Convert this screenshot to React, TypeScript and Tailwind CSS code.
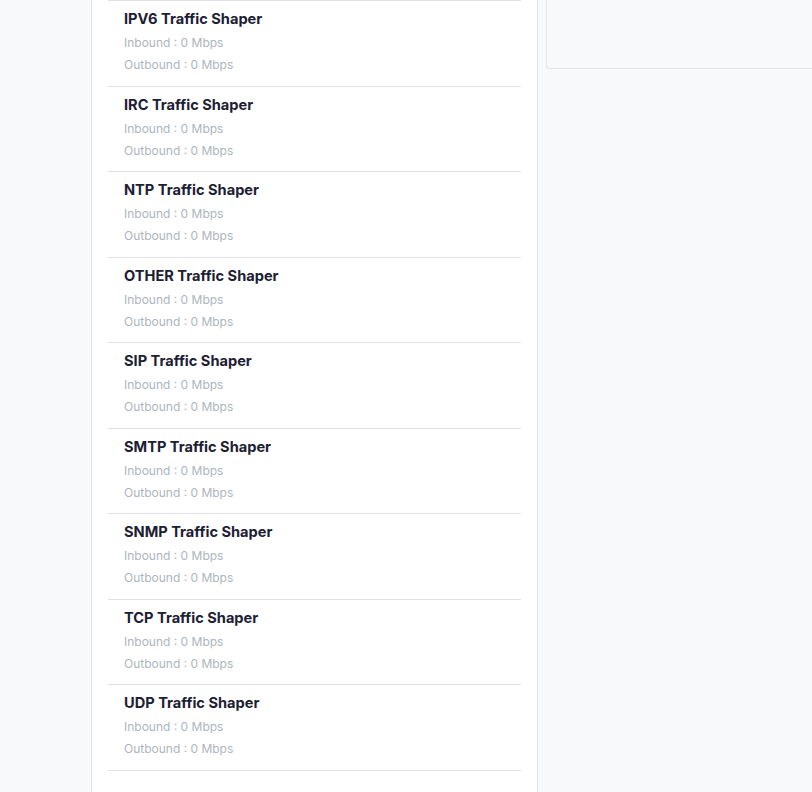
const SHAPERS = ['IPV6', 'IRC', 'NTP', 'OTHER', 'SIP', 'SMTP', 'SNMP', 'TCP', 'UDP'];

function ShaperRow({ name }: { name: string }) {
  return (
    <li className="border-b border-[#dee2e6] pl-4 pt-2 pb-[10px]">
      <h6 className="text-[14.6px] font-bold leading-[20px] text-[#1c2033] mb-[3px]">{name} Traffic Shaper</h6>
      <p className="text-[12px] leading-[22px] text-[#adb5bd]">Inbound : 0 Mbps</p>
      <p className="text-[12px] leading-[21.5px] text-[#adb5bd]">Outbound : 0 Mbps</p>
    </li>
  );
}

export default function App() {
  return (
    <div className="h-[792px] overflow-hidden bg-[#f8f9fa] pl-[91px] font-['Inter',sans-serif]">
      <div className="flex items-start gap-2">
        <div className="w-[447px] shrink-0 h-[792px] bg-white border-x border-[#dee2e6] px-4">
          <ul className="border-t border-[#dee2e6]">
            {SHAPERS.map((s) => (
              <ShaperRow key={s} name={s} />
            ))}
          </ul>
        </div>
        <div className="flex-1 h-[69px] border-l border-b border-[#e3e6ea] rounded-bl-[4px] bg-[#f8f9fa]" />
      </div>
    </div>
  );
}
